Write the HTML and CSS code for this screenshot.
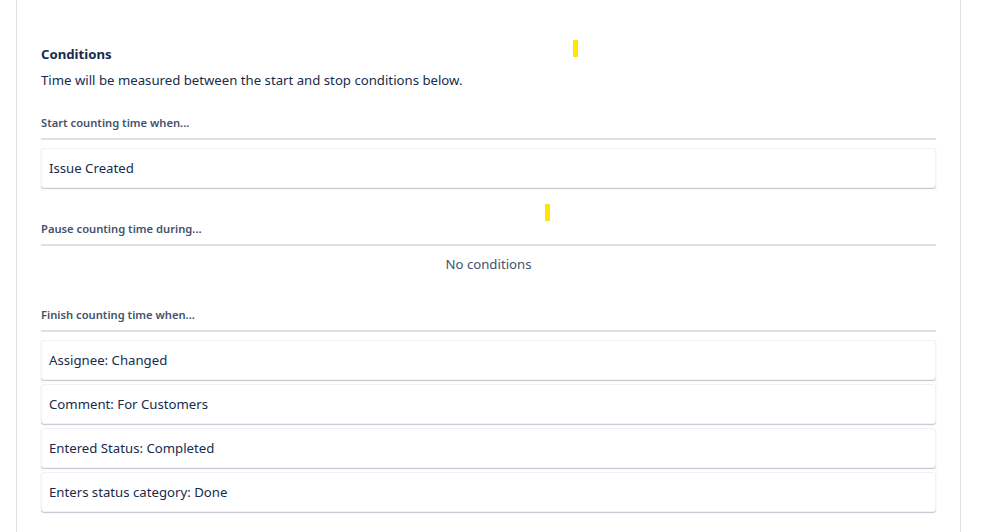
FILE: index.html
```html
<!DOCTYPE html>
<html>
<head>
<meta charset="utf-8">
<link rel="stylesheet" href="styles.css">
</head>
<body>
<div class="panel">
  <h2 class="title">Conditions</h2>
  <p class="desc">Time will be measured between the start and stop conditions below.</p>

  <section class="group">
    <h3 class="group-label">Start counting time when...</h3>
    <div class="list">
      <div class="card">Issue Created</div>
    </div>
  </section>

  <section class="group">
    <h3 class="group-label">Pause counting time during...</h3>
    <div class="empty">No conditions</div>
  </section>

  <section class="group">
    <h3 class="group-label">Finish counting time when...</h3>
    <div class="list">
      <div class="card">Assignee: Changed</div>
      <div class="card">Comment: For Customers</div>
      <div class="card">Entered Status: Completed</div>
      <div class="card">Enters status category: Done</div>
    </div>
  </section>

  <span class="marker marker-a"></span>
  <span class="marker marker-b"></span>
</div>
</body>
</html>
```
FILE: styles.css
```css
html, body {
  margin: 0;
  padding: 0;
  background: #ffffff;
}
body {
  font-family: "Noto Sans", "Open Sans", sans-serif;
  color: #172b4d;
  font-size: 13.2px;
  height: 532px;
  overflow: hidden;
}
.panel {
  position: relative;
  margin-left: 16px;
  width: 945px;
  height: 532px;
  box-sizing: border-box;
  padding: 44px 24px 0 24px;
  border-left: 1px solid #dfe1e6;
  border-right: 1px solid #dfe1e6;
}
.title {
  margin: 0;
  font-size: 13.2px;
  line-height: 20px;
  font-weight: 700;
  color: #172b4d;
}
.desc {
  margin: 6px 0 0 0;
  font-size: 13.2px;
  line-height: 20px;
}
.group {
  margin-top: 33px;
}
.group:first-of-type {
  margin-top: 25px;
}
.group-label {
  margin: 0;
  font-size: 11.2px;
  line-height: 16px;
  font-weight: 600;
  color: #42526e;
  padding-bottom: 7px;
  border-bottom: 2px solid #dfe1e6;
}
.list {
  display: flex;
  flex-direction: column;
  gap: 4px;
  padding-top: 8px;
}
.card {
  height: 40px;
  box-sizing: border-box;
  display: flex;
  align-items: center;
  padding: 0 7px;
  background: #fff;
  border: 1px solid #f1f2f4;
  border-radius: 3px;
  box-shadow: 0 1px 1px rgba(9, 30, 66, 0.25);
  font-size: 13.2px;
  color: #172b4d;
}
.empty {
  text-align: center;
  color: #42526e;
  font-size: 13.2px;
  line-height: 20px;
  padding-top: 8px;
}
.marker {
  position: absolute;
  width: 5px;
  height: 17px;
  background: #ffe500;
}
.marker-a {
  left: 556px;
  top: 40px;
}
.marker-b {
  left: 528px;
  top: 204px;
}
```
